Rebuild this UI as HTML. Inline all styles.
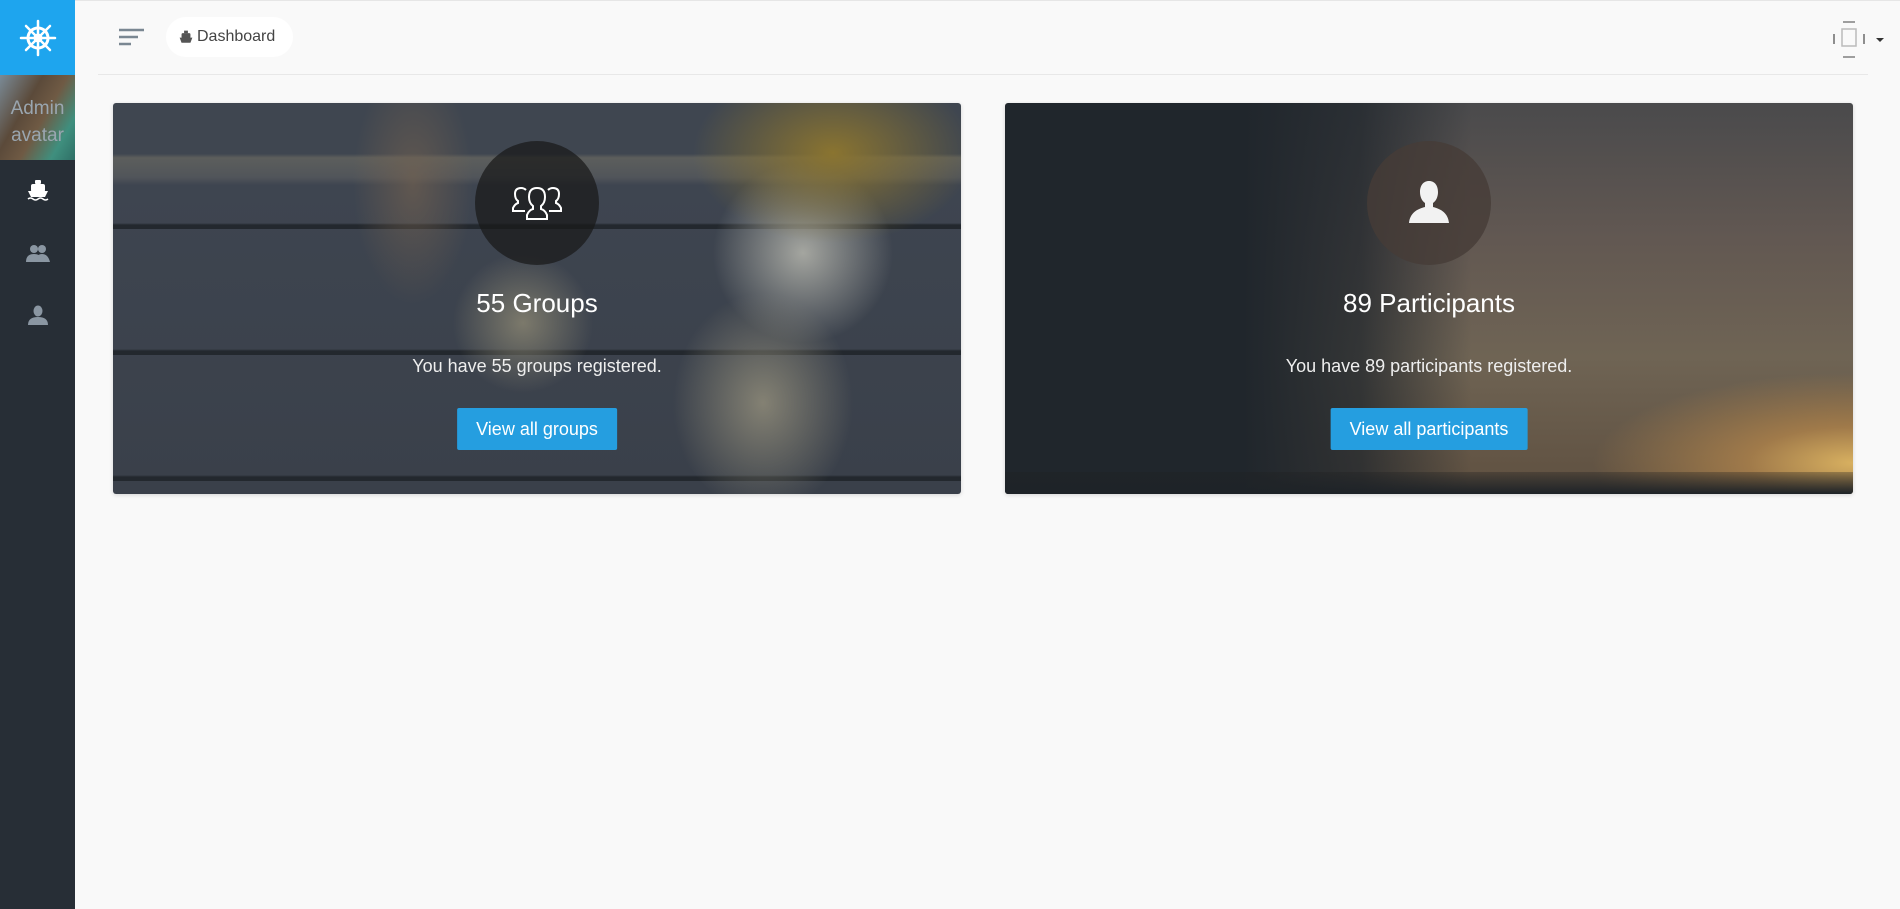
<!DOCTYPE html>
<html><head><meta charset="utf-8"><style>
*{margin:0;padding:0;box-sizing:border-box}
body{width:1900px;height:909px;background:#f9f9f9;font-family:"Liberation Sans",sans-serif;position:relative;overflow:hidden}
.side{position:absolute;left:0;top:0;width:75px;height:909px;background:#272e36}
.logo{position:absolute;left:0;top:0;width:75px;height:75px;background:#1ea5ee;display:flex;align-items:center;justify-content:center}
.av{position:absolute;left:0;top:75px;width:75px;height:85px;background:linear-gradient(120deg,#7a8a96 0%,#5b4a3a 35%,#6f5a44 55%,#3f8f7e 80%,#2f6f66 100%);color:#9aa6b0;font-size:19px;text-align:center;line-height:27px;padding-top:20px}
.ic{position:absolute;left:0;width:75px;display:flex;justify-content:center}
.top{position:absolute;left:75px;top:0;right:0;height:1px;background:#e6e6e6}
.hl{position:absolute;left:98px;top:74px;width:1770px;height:1px;background:#e8e8e8}
.pill{position:absolute;left:166px;top:17px;width:127px;height:40px;background:#fff;border-radius:20px;font-size:16px;color:#444;display:flex;align-items:center;padding-left:13px;gap:4px}
.card{position:absolute;top:103px;width:848px;height:391px;border-radius:3px;overflow:hidden;box-shadow:0 1px 4px rgba(0,0,0,.15);color:#fff;text-align:center}
.c1{left:113px;background:
radial-gradient(ellipse 90px 110px at 650px 300px,rgba(150,145,125,.8) 0%,rgba(80,80,80,0) 100%),
radial-gradient(ellipse 70px 70px at 410px 220px,rgba(140,135,115,.8) 0%,rgba(0,0,0,0) 100%),
radial-gradient(ellipse 140px 90px at 720px 50px,#8a7430 0%,rgba(0,0,0,0) 100%),
radial-gradient(ellipse 90px 90px at 690px 150px,rgba(190,190,180,.8) 0%,rgba(0,0,0,0) 100%),
radial-gradient(ellipse 60px 120px at 300px 80px,rgba(120,100,80,.6) 0%,rgba(0,0,0,0) 100%),
repeating-linear-gradient(180deg,rgba(0,0,0,0) 0px,rgba(0,0,0,0) 120px,#23282e 122px,#23282e 126px),
linear-gradient(180deg,#3f4650 0%,#3f4650 13%,#5c5e5c 14%,#51555a 19%,#3e4550 21%,#3a404a 100%)}
.c2{left:1005px;background:
linear-gradient(90deg,#20262c 0%,#20262c 28%,rgba(32,38,44,.75) 42%,rgba(0,0,0,0) 55%),
radial-gradient(ellipse 260px 90px at 848px 360px,#d8b060 0%,#a07a4a 40%,rgba(0,0,0,0) 100%),
linear-gradient(180deg,#4a4a4c 0%,#625852 35%,#6f6454 65%,#5f5040 100%)}
.c2 .grass{position:absolute;left:0;right:0;bottom:0;height:22px;background:linear-gradient(180deg,rgba(30,30,30,.3),#1e2328)}
.circ{position:absolute;left:50%;top:38px;width:124px;height:124px;margin-left:-62px;border-radius:50%;background:rgba(25,25,25,.72);display:flex;align-items:center;justify-content:center}
.c2 .circ{background:rgba(70,60,55,.8)}
.h{position:absolute;left:0;right:0;top:185px;font-size:26px;font-weight:300}
.s{position:absolute;left:0;right:0;top:253px;font-size:18px;color:#eee}
.btn{position:absolute;left:50%;top:305px;height:42px;transform:translateX(-50%);background:#259ee0;border-radius:2px;font-size:18px;line-height:42px;padding:0 19px;white-space:nowrap}
</style></head><body>
<div class="side">
<div class="logo"><svg width="38" height="38" viewBox="0 0 38 38" fill="none" stroke="#fff" stroke-width="3"><circle cx="19" cy="19" r="10"/><circle cx="19" cy="19" r="3"/><path d="M19 2v34M2 19h34M7 7l24 24M31 7L7 31" stroke-width="2.5" stroke-linecap="round"/></svg></div>
<div class="av">Admin<br>avatar</div>
<div class="ic" style="top:179px"><svg width="22" height="22" viewBox="0 0 22 22" fill="#fff"><rect x="8" y="1" width="6" height="4" rx="1"/><rect x="4" y="5" width="14" height="8" rx="2"/><path d="M1 12h20l-3 6H4z"/><path d="M1 20q2.5-2 5 0t5 0 5 0 5 0" stroke="#fff" stroke-width="1.5" fill="none"/></svg></div>
<div class="ic" style="top:243px"><svg width="24" height="20" viewBox="0 0 24 20" fill="#8a96a2"><circle cx="8" cy="6" r="4"/><circle cx="16" cy="6" r="4"/><path d="M0 19q0-8 8-8t8 8zM10 19q0-8 6-8t8 8z"/></svg></div>
<div class="ic" style="top:305px"><svg width="20" height="20" viewBox="0 0 20 20" fill="#8a96a2"><ellipse cx="10" cy="6" rx="4.5" ry="5.5"/><path d="M0 20q0-8 10-8t10 8z"/></svg></div>
</div>
<div class="top"></div>
<svg style="position:absolute;left:118px;top:28px" width="28" height="18" viewBox="0 0 28 18"><path d="M1 2h25M1 9h19M1 16h12" stroke="#7a8792" stroke-width="2.5"/></svg>
<div class="pill"><svg width="14" height="14" viewBox="0 0 22 22" fill="#555"><rect x="8" y="1" width="6" height="4"/><rect x="4" y="5" width="14" height="8" rx="2"/><path d="M1 12h20l-3 8H4z"/></svg>Dashboard</div>
<div class="hl"></div>
<svg style="position:absolute;left:1826px;top:20px" width="60" height="40" viewBox="0 0 60 40"><path d="M8 14v10M38 14v10" stroke="#222" stroke-width="1"/><path d="M17 2h12M17 37h12" stroke="#444"/><rect x="16" y="9" width="14" height="17" fill="none" stroke="#bbb" stroke-width="1.5"/><path d="M50 18h8l-4 4z" fill="#333"/></svg>
<div class="card c1">
<div class="circ"><svg width="52" height="36" viewBox="0 0 52 36" fill="none" stroke="#fff" stroke-width="2"><path d="M16 34h20v-4q-2-5-6-6v-3q4-3 4-9 0-9-8-9t-8 9q0 6 4 9v3q-4 1-6 6z"/><path d="M14 26H2v-3q2-4 5-5v-2q-3-2-3-7 0-6 6-6 3 0 5 2M38 26h12v-3q-2-4-5-5v-2q3-2 3-7 0-6-6-6-3 0-5 2"/></svg></div>
<div class="h">55 Groups</div>
<div class="s">You have 55 groups registered.</div>
<div class="btn">View all groups</div>
</div>
<div class="card c2"><div class="grass"></div>
<div class="circ"><svg width="48" height="48" viewBox="0 0 48 48" fill="#f2f2f2"><path d="M24 2c-6 0-9 5-9 11 0 5 2 9 5 11v4c-8 2-15 6-16 16h40c-1-10-8-14-16-16v-4c3-2 5-6 5-11 0-6-3-11-9-11z"/></svg></div>
<div class="h">89 Participants</div>
<div class="s">You have 89 participants registered.</div>
<div class="btn">View all participants</div>
</div>
</body></html>
